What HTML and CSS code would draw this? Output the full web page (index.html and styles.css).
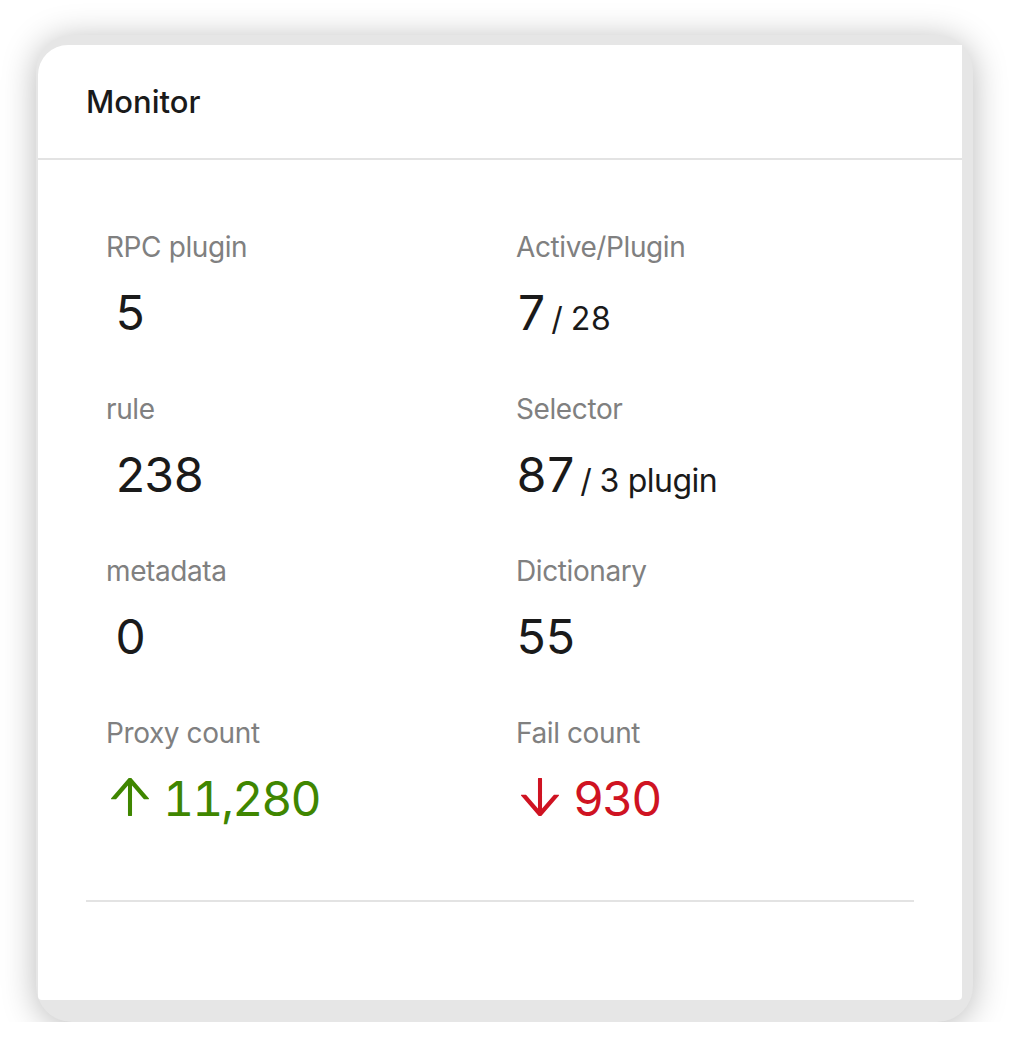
FILE: index.html
```html
<!DOCTYPE html>
<html lang="en">
<head>
    <meta charset="UTF-8">
    <meta name="viewport" content="width=device-width, initial-scale=1.0">
    <title>Monitor</title>
    <link rel="stylesheet" href="styles.css">
</head>
<body>

    <div class="frame">
        <div class="card">
            <div class="card-head">Monitor</div>

            <div class="card-body">
                <div class="stats">
                    <div class="stat">
                        <div class="stat-title">RPC plugin</div>
                        <div class="stat-value pad">5</div>
                    </div>
                    <div class="stat">
                        <div class="stat-title">Active/Plugin</div>
                        <div class="stat-value">7<span class="suffix">/ 28</span></div>
                    </div>
                    <div class="stat">
                        <div class="stat-title">rule</div>
                        <div class="stat-value pad">238</div>
                    </div>
                    <div class="stat">
                        <div class="stat-title">Selector</div>
                        <div class="stat-value">87<span class="suffix">/ 3 plugin</span></div>
                    </div>
                    <div class="stat">
                        <div class="stat-title">metadata</div>
                        <div class="stat-value pad">0</div>
                    </div>
                    <div class="stat">
                        <div class="stat-title">Dictionary</div>
                        <div class="stat-value">55</div>
                    </div>
                    <div class="stat">
                        <div class="stat-title">Proxy count</div>
                        <div class="stat-value up">
                            <svg class="arrow" viewBox="156 162 712 712" fill="currentColor"><path d="M868 545.5L536.1 163a31.960 31.960 0 00-48.3 0L156 545.5a7.97 7.97 0 006 13.2h81c4.6 0 9-2 12.1-5.5L474 300.9V864c0 4.4 3.6 8 8 8h60c4.4 0 8-3.6 8-8V300.9l218.9 252.3c3 3.5 7.4 5.5 12.1 5.5h81c6.8 0 10.5-8 6-13.2z"/></svg>11,280
                        </div>
                    </div>
                    <div class="stat">
                        <div class="stat-title">Fail count</div>
                        <div class="stat-value down">
                            <svg class="arrow" viewBox="156 150 712 712" fill="currentColor"><path d="M862 465.3h-81c-4.6 0-9 2-12.1 5.5L550 723.1V160c0-4.4-3.6-8-8-8h-60c-4.4 0-8 3.6-8 8v563.1L255.1 470.8c-3-3.5-7.4-5.5-12.1-5.5h-81c-6.8 0-10.5 8.1-6 13.2L487.9 861a31.96 31.96 0 0048.3 0L868 478.5c4.5-5.2.8-13.2-6-13.2z"/></svg>930
                        </div>
                    </div>
                </div>

                <div class="divider"></div>
            </div>
        </div>
    </div>

</body>
</html>
```

FILE: styles.css
```css
body {
    margin: 0;
    background: #fff;
    font-family: Inter, "Noto Sans", sans-serif;
}

/* cadre gris autour de la carte */
.frame {
    width: 937px;
    height: 987px;
    box-sizing: border-box;
    margin: 35px 0 0 36px;
    padding: 10px 11px 22px 2px;
    background: #e6e6e6;
    border-radius: 36px;
    box-shadow: 0 4px 34px rgba(0, 0, 0, 0.28);
}

.card {
    height: 100%;
    background: #fff;
    border-radius: 30px 0 4px 4px;
}

.card-head {
    height: 113px;
    line-height: 113px;
    padding: 0 48px;
    font-size: 31px;
    font-weight: 500;
    color: #1a1a1a;
    border-bottom: 2px solid #e3e3e3;
}

.card-body {
    padding: 48px 48px 0;
}

.stats {
    display: grid;
    grid-template-columns: 1fr 1fr;
    column-gap: 32px;
    row-gap: 38px;
    padding: 17px 20px 0;
}

.stat-title {
    font-size: 28px;
    line-height: 44px;
    letter-spacing: -0.4px;
    color: #808080;
    margin-bottom: 8px;
}

.stat-value {
    font-size: 48px;
    line-height: 72px;
    letter-spacing: -2px;
    color: #1a1a1a;
    white-space: nowrap;
    font-variant-numeric: tabular-nums;
}

.stat-value.pad { padding-left: 9px; }

.suffix {
    font-size: 32px;
    line-height: 32px;
    letter-spacing: -0.5px;
    margin-left: 6px;
}

.up { color: #3f8600; }
.down { color: #cf1322; }

.arrow {
    width: 38px;
    height: 38px;
    margin: 0 14px 0 5px;
    vertical-align: baseline;
}

.divider {
    height: 2px;
    background: #e3e3e3;
    margin-top: 65px;
}
```
